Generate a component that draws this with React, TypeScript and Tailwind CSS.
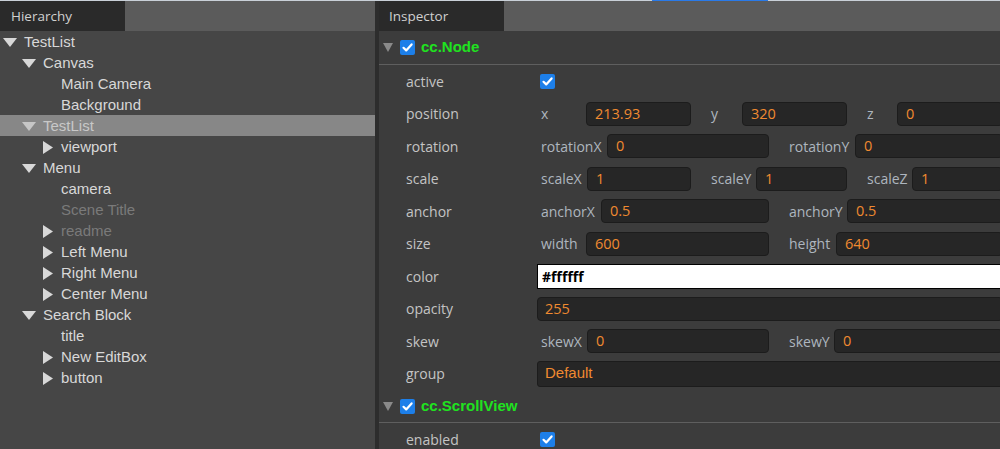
import React from 'react';

type TreeItem = {
    label: string;
    level: number;
    arrow?: 'down' | 'right';
    dim?: boolean;
    selected?: boolean;
};

const tree: TreeItem[] = [
    { label: 'TestList', level: 0, arrow: 'down' },
    { label: 'Canvas', level: 1, arrow: 'down' },
    { label: 'Main Camera', level: 2 },
    { label: 'Background', level: 2 },
    { label: 'TestList', level: 1, arrow: 'down', selected: true },
    { label: 'viewport', level: 2, arrow: 'right' },
    { label: 'Menu', level: 1, arrow: 'down' },
    { label: 'camera', level: 2 },
    { label: 'Scene Title', level: 2, dim: true },
    { label: 'readme', level: 2, arrow: 'right', dim: true },
    { label: 'Left Menu', level: 2, arrow: 'right' },
    { label: 'Right Menu', level: 2, arrow: 'right' },
    { label: 'Center Menu', level: 2, arrow: 'right' },
    { label: 'Search Block', level: 1, arrow: 'down' },
    { label: 'title', level: 2 },
    { label: 'New EditBox', level: 2, arrow: 'right' },
    { label: 'button', level: 2, arrow: 'right' },
];

const indent = ['pl-0', 'pl-[19px]', 'pl-[37px]'];

function Arrow({ dir, color }: { dir?: 'down' | 'right'; color: string }) {
    if (dir === 'down') {
        return (
            <svg width="14" height="9" viewBox="0 0 14 9" className="ml-[3px]">
                <polygon points="0,0 14,0 7,9" fill={color} />
            </svg>
        );
    }
    if (dir === 'right') {
        return (
            <svg width="10" height="13" viewBox="0 0 10 13" className="ml-[6px]">
                <polygon points="0,0 10,6.5 0,13" fill={color} />
            </svg>
        );
    }
    return null;
}

function Check() {
    return (
        <svg width="15" height="15" viewBox="0 0 15 15" className="shrink-0">
            <rect x="0" y="0" width="15" height="15" rx="2" fill="#1d7fe9" />
            <path d="M3.5 7.8 L6.2 10.4 L11.6 4.4" stroke="#fff" strokeWidth="2.2" fill="none" strokeLinecap="round" strokeLinejoin="round" />
        </svg>
    );
}

function Hierarchy() {
    return (
        <div className="flex w-[375px] shrink-0 flex-col">
            <div className="flex h-[30px] shrink-0 bg-[#5b5b5b]">
                <div className="flex w-[125px] items-center bg-[#2a2a2a] pl-[11px] font-['Open_Sans',sans-serif] text-[13.5px] text-[#d0d0d0]">
                    Hierarchy
                </div>
            </div>
            <div className="flex-1 bg-[#464646] font-['Liberation_Sans',Arial,sans-serif] text-[15px]">
                {tree.map((item, i) => (
                    <div
                        key={i}
                        className={`flex h-[21px] items-center pt-px ${indent[item.level]} ${item.selected ? 'bg-[#878787]' : ''}`}
                    >
                        <div className="flex w-6 shrink-0 items-center">
                            <Arrow dir={item.arrow} color={item.selected ? '#c6c6c6' : '#d8d8d8'} />
                        </div>
                        <span className={item.dim ? 'text-[#7a7a7a]' : item.selected ? 'text-[#c8c8c8]' : 'text-[#d8d8d8]'}>
                            {item.label}
                        </span>
                    </div>
                ))}
            </div>
        </div>
    );
}

type Field = { label: string; value: string; lw: string };

function FieldBox({ f }: { f: Field }) {
    return (
        <div className="flex min-w-0 items-center">
            <div className={`shrink-0 text-[#aeb6bf] ${f.lw}`}>{f.label}</div>
            <div className="flex h-[24px] flex-1 items-center rounded-[4px] border border-[#1c1c1c] bg-[#262626] pl-2 text-[14.5px] text-[#f08a30]">
                {f.value}
            </div>
        </div>
    );
}

function Row({ label, tall, children }: { label: string; tall?: boolean; children?: React.ReactNode }) {
    return (
        <div className={`flex items-center ${tall ? 'h-[33px]' : 'h-[32px]'}`}>
            <div className="w-[158px] shrink-0 pl-[27px] text-[#c4c4c4]">{label}</div>
            <div className="w-[466px] shrink-0">{children}</div>
        </div>
    );
}

function Header({ title, tall }: { title: string; tall?: boolean }) {
    return (
        <div className={`flex items-center border-b border-[#5f5f5f] pl-1 ${tall ? 'h-[34px]' : 'h-[33px]'}`}>
            <svg width="10" height="9" viewBox="0 0 10 9">
                <polygon points="0,0 10,0 5,9" fill="#8a8a8a" />
            </svg>
            <div className="ml-[7px]">
                <Check />
            </div>
            <span className="ml-[6px] font-['Liberation_Sans',Arial,sans-serif] text-[15px] font-bold text-[#1fe31f]">
                {title}
            </span>
        </div>
    );
}

function Inspector() {
    return (
        <div className="flex min-w-0 flex-1 flex-col overflow-hidden">
            <div className="flex h-[30px] shrink-0 bg-[#5b5b5b]">
                <div className="flex w-[125px] items-center bg-[#2a2a2a] pl-[10px] font-['Open_Sans',sans-serif] text-[13.5px] text-[#d0d0d0]">
                    Inspector
                </div>
            </div>
            <div className="min-h-0 flex-1 overflow-hidden bg-[#3c3c3c] font-['Open_Sans',sans-serif] text-[14px]">
                <Header title="cc.Node" tall />
                <Row label="active">
                    <div className="pl-[3px]">
                        <Check />
                    </div>
                </Row>
                <Row label="position" tall>
                    <div className="grid grid-cols-3 gap-[2px]">
                        <FieldBox f={{ label: 'x', value: '213.93', lw: 'w-[49px] pl-1' }} />
                        <FieldBox f={{ label: 'y', value: '320', lw: 'w-[49px] pl-[18px]' }} />
                        <FieldBox f={{ label: 'z', value: '0', lw: 'w-[48px] pl-[18px]' }} />
                    </div>
                </Row>
                <Row label="rotation">
                    <div className="grid grid-cols-2 gap-[2px]">
                        <FieldBox f={{ label: 'rotationX', value: '0', lw: 'w-[70px] pl-1' }} />
                        <FieldBox f={{ label: 'rotationY', value: '0', lw: 'w-[84px] pl-[18px]' }} />
                    </div>
                </Row>
                <Row label="scale" tall>
                    <div className="grid grid-cols-3 gap-[2px]">
                        <FieldBox f={{ label: 'scaleX', value: '1', lw: 'w-[50px] pl-1' }} />
                        <FieldBox f={{ label: 'scaleY', value: '1', lw: 'w-[63px] pl-[18px]' }} />
                        <FieldBox f={{ label: 'scaleZ', value: '1', lw: 'w-[63px] pl-[18px]' }} />
                    </div>
                </Row>
                <Row label="anchor">
                    <div className="grid grid-cols-2 gap-[2px]">
                        <FieldBox f={{ label: 'anchorX', value: '0.5', lw: 'w-[64px] pl-1' }} />
                        <FieldBox f={{ label: 'anchorY', value: '0.5', lw: 'w-[76px] pl-[18px]' }} />
                    </div>
                </Row>
                <Row label="size" tall>
                    <div className="grid grid-cols-2 gap-[2px]">
                        <FieldBox f={{ label: 'width', value: '600', lw: 'w-[49px] pl-1' }} />
                        <FieldBox f={{ label: 'height', value: '640', lw: 'w-[65px] pl-[18px]' }} />
                    </div>
                </Row>
                <Row label="color">
                    <div className="flex h-[25px] items-center border border-black bg-white pl-1 font-bold text-black">
                        #ffffff
                    </div>
                </Row>
                <Row label="opacity" tall>
                    <div className="flex h-[24px] items-center rounded-[4px] border border-[#1c1c1c] bg-[#262626] pl-[7px] text-[14.5px] text-[#f08a30]">
                        255
                    </div>
                </Row>
                <Row label="skew">
                    <div className="grid grid-cols-2 gap-[2px]">
                        <FieldBox f={{ label: 'skewX', value: '0', lw: 'w-[50px] pl-1' }} />
                        <FieldBox f={{ label: 'skewY', value: '0', lw: 'w-[63px] pl-[18px]' }} />
                    </div>
                </Row>
                <Row label="group" tall>
                    <div className="flex h-[26px] items-center rounded-[3px] border border-[#1c1c1c] bg-[#262626] pl-[7px] font-['Liberation_Sans',Arial,sans-serif] text-[15px] text-[#f08a30]">
                        Default
                    </div>
                </Row>
                <Header title="cc.ScrollView" />
                <Row label="enabled">
                    <div className="pl-[3px]">
                        <Check />
                    </div>
                </Row>
            </div>
        </div>
    );
}

export default function App() {
    return (
        <div className="flex h-[449px] w-[1000px] flex-col overflow-hidden bg-[#3c3c3c]">
            <div className="flex h-px shrink-0 bg-[#c9d0d8]">
                <div className="w-[652px]" />
                <div className="w-[116px] bg-[#2a7ae8]" />
            </div>
            <div className="flex min-h-0 flex-1">
                <Hierarchy />
                <div className="w-[4px] shrink-0 bg-[#2d2d2d]" />
                <Inspector />
            </div>
        </div>
    );
}
